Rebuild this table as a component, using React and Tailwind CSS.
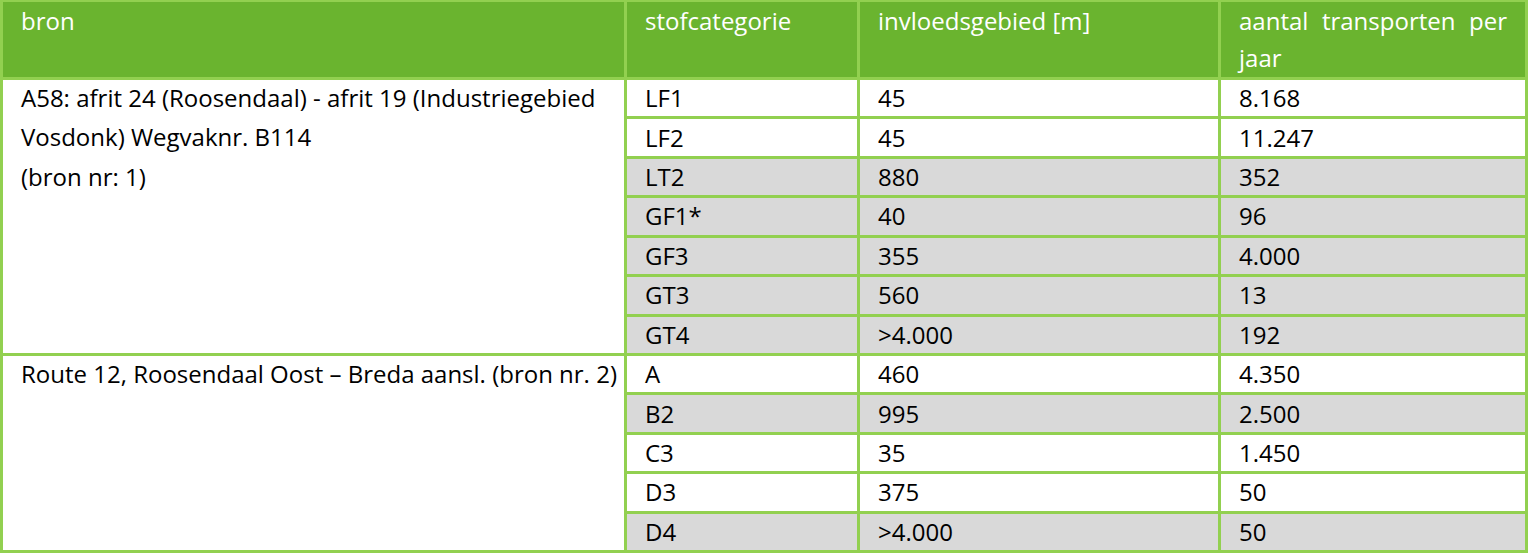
const rows = [
  { cat: 'LF1', gebied: '45', aantal: '8.168', grey: false },
  { cat: 'LF2', gebied: '45', aantal: '11.247', grey: false },
  { cat: 'LT2', gebied: '880', aantal: '352', grey: true },
  { cat: 'GF1*', gebied: '40', aantal: '96', grey: true },
  { cat: 'GF3', gebied: '355', aantal: '4.000', grey: true },
  { cat: 'GT3', gebied: '560', aantal: '13', grey: true },
  { cat: 'GT4', gebied: '>4.000', aantal: '192', grey: true },
  { cat: 'A', gebied: '460', aantal: '4.350', grey: false },
  { cat: 'B2', gebied: '995', aantal: '2.500', grey: true },
  { cat: 'C3', gebied: '35', aantal: '1.450', grey: false },
  { cat: 'D3', gebied: '375', aantal: '50', grey: false },
  { cat: 'D4', gebied: '>4.000', aantal: '50', grey: true }
]

const Cell = ({ grey, children }) => (
  <div className={`flex items-center px-[18px] ${grey ? 'bg-[#d9d9d9]' : 'bg-white'}`}>
    {children}
  </div>
)

export default function App() {
  return (
    <div className="w-[1528px] h-[554px] bg-white text-[24px] text-black" style={{ fontFamily: '"Open Sans", "Noto Sans", sans-serif' }}>
      <div className="grid h-[553px] grid-cols-[621px_230px_358px_304px] grid-rows-[74px_repeat(12,1fr)] gap-[3px] p-[3px] bg-[#92d050]">
        <div className="bg-[#6ab42f] text-white px-[18px] leading-[37px] -mt-px">bron</div>
        <div className="bg-[#6ab42f] text-white px-[18px] leading-[37px] -mt-px">stofcategorie</div>
        <div className="bg-[#6ab42f] text-white px-[18px] leading-[37px] -mt-px">invloedsgebied [m]</div>
        <div className="bg-[#6ab42f] text-white px-[18px] leading-[37px] -mt-px">
          <div className="flex justify-between">
            <span>aantal</span>
            <span>transporten</span>
            <span>per</span>
          </div>
          <div>jaar</div>
        </div>

        {rows.map((row, i) => (
          <div key={row.cat} className="contents">
            {i === 0 && (
              <div className="row-span-7 bg-white px-[18px] leading-[39.33px]">
                <div className="-mt-[2px] whitespace-nowrap">
                  A58: afrit 24 (Roosendaal) - afrit 19 (Industriegebied
                  <br />
                  Vosdonk) Wegvaknr. B114
                  <br />
                  (bron nr: 1)
                </div>
              </div>
            )}
            {i === 7 && (
              <div className="row-span-5 bg-white px-[18px] leading-[39.33px]">
                <div className="-mt-[2px] whitespace-nowrap">Route 12, Roosendaal Oost – Breda aansl. (bron nr. 2)</div>
              </div>
            )}
            <Cell grey={row.grey}>{row.cat}</Cell>
            <Cell grey={row.grey}>{row.gebied}</Cell>
            <Cell grey={row.grey}>{row.aantal}</Cell>
          </div>
        ))}
      </div>
    </div>
  )
}
